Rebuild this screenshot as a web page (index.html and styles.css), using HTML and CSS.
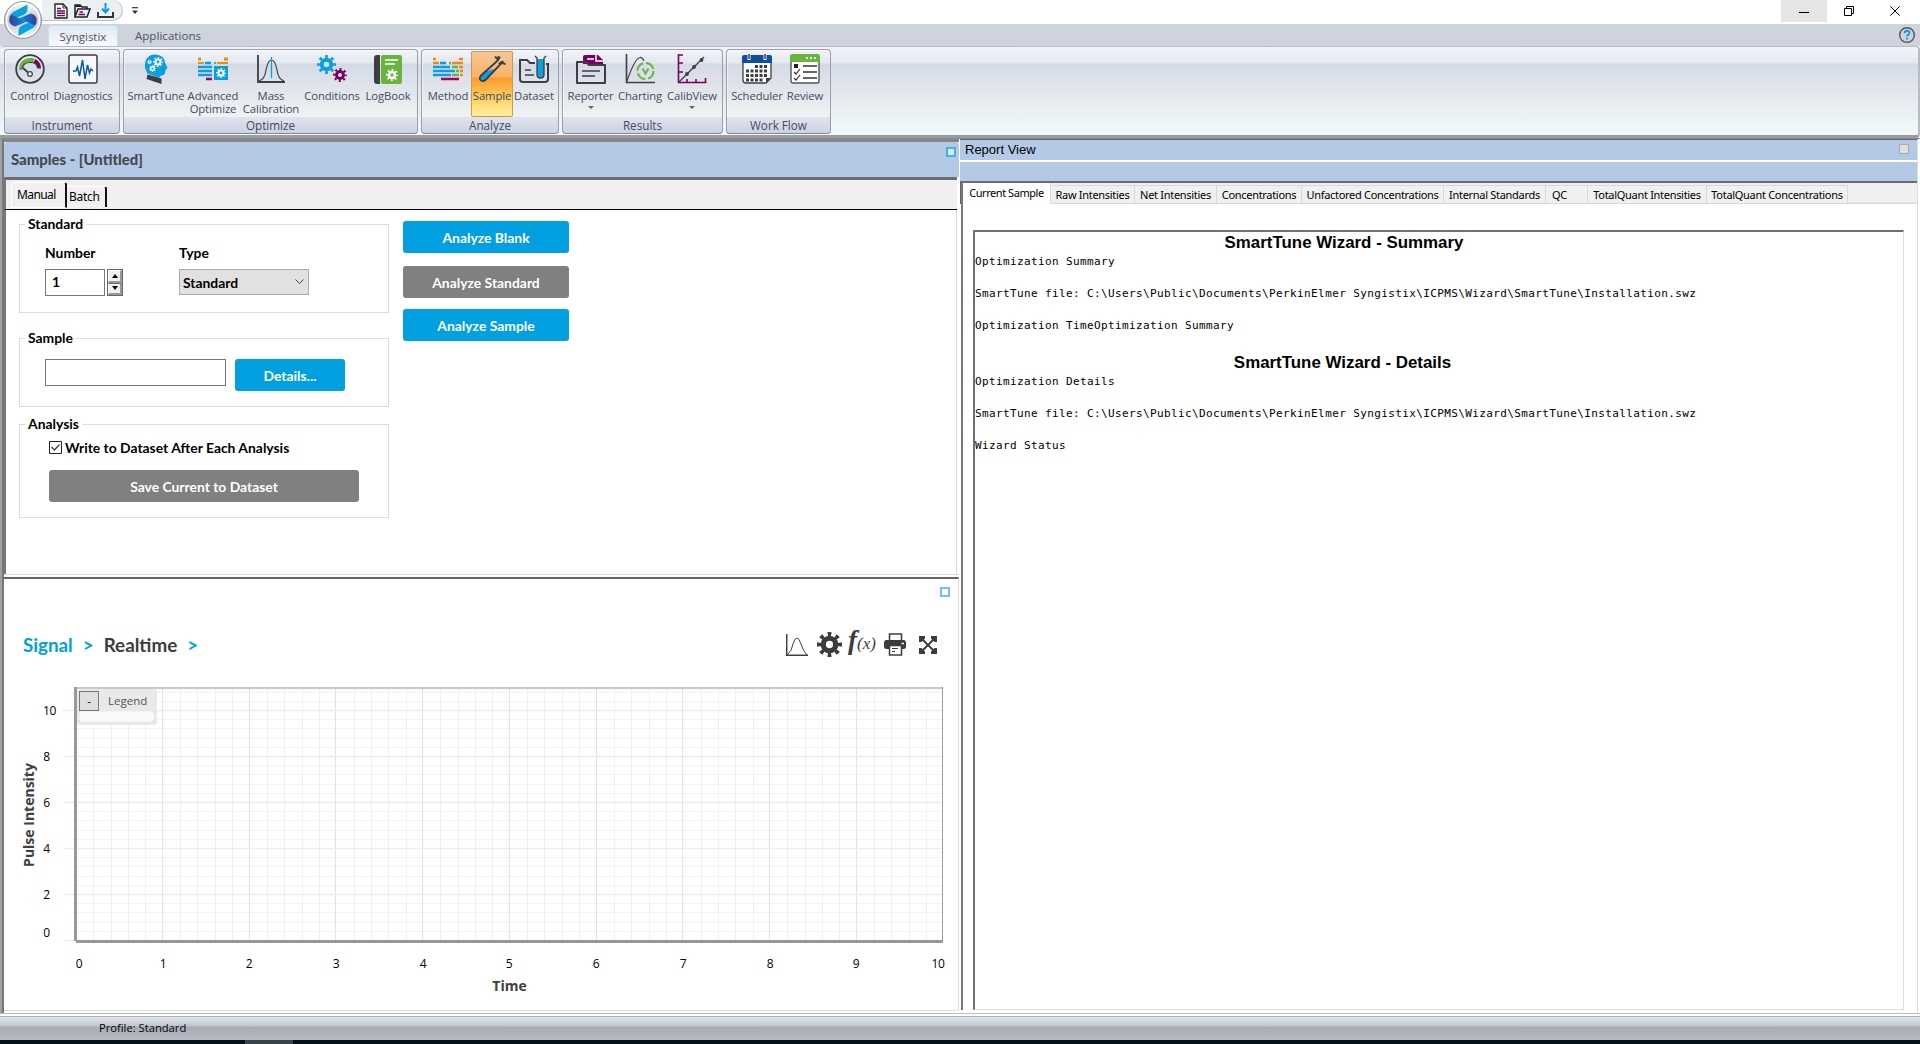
FILE: index.html
```html
<!DOCTYPE html>
<html lang="en">
<head>
<meta charset="utf-8">
<title>Syngistix</title>
<link rel="stylesheet" href="styles.css">
</head>
<body>
<svg class="defs" width="0" height="0">
  <defs>
    <symbol id="gear" viewBox="0 0 24 24">
      <circle cx="12" cy="12" r="6" fill="none" stroke="currentColor" stroke-width="5"/>
      <circle cx="12" cy="12" r="10" fill="none" stroke="currentColor" stroke-width="4" pathLength="16" stroke-dasharray="0.9 1.1" stroke-dashoffset="0.45"/>
    </symbol>
    <linearGradient id="orb" x1="0" y1="0" x2="0" y2="1"><stop offset="0" stop-color="#fff"/><stop offset=".5" stop-color="#c6c7ca"/><stop offset="1" stop-color="#f4f4f5"/></linearGradient>
    <linearGradient id="essA" x1="0" x2="1"><stop offset="0" stop-color="#3d3a9a"/><stop offset=".6" stop-color="#1473c6"/><stop offset="1" stop-color="#06a3df"/></linearGradient>
    <linearGradient id="essB" x1="0" x2="1"><stop offset="0" stop-color="#06a3df"/><stop offset=".4" stop-color="#1473c6"/><stop offset="1" stop-color="#3d3a9a"/></linearGradient>
  </defs>
</svg>
<div class="app">
  <header class="titlebar">
    <svg class="orb" viewBox="0 0 40 40" width="40" height="40">
      <circle cx="20" cy="20" r="18.500" fill="url(#orb)" stroke="#8f9196"/>
      <circle cx="20" cy="20" r="16.500" fill="none" stroke="#fff" stroke-width="1.500"/>
      <path d="M24.500 4.500V9Q24.500 13 20 15L14 17.500 8 20Q6 14 11 11.500Z" fill="#06a3df"/>
      <path d="M15.500 36V31Q15.500 27 20 25L26 22.500 32 20Q34 26 29 28.500Z" fill="#06a3df"/>
      <path d="M6.500 17Q5 25 12 26.500L17 24.500 24 21.500 13.500 17 8 14.500Z" fill="url(#essA)"/>
      <path d="M33.500 23Q35 15 28 13.500L23 15.500 16 18.500 26.500 23 32 25.500Z" fill="url(#essB)"/>
    </svg>
    <div class="quick">
      <svg width="14" height="16" viewBox="0 0 14 16"><path d="M1 1H9L13 5V15H1Z" fill="#fff" stroke="#222" stroke-width="1.400"/><path d="M9 1V5H13" fill="none" stroke="#222"/><path d="M3 5.500H7M3 8H11M3 10.300H11M3 12.600H11" stroke="#7a0060" stroke-width="1.400"/></svg>
      <svg width="17" height="14" viewBox="0 0 17 14"><path d="M1 13V1H6L8 3H13V5M1 13 4 5H16L13 13Z" fill="none" stroke="#222" stroke-width="1.500"/><path d="M1 1H6L8 3H2Z" fill="#222"/><path d="M5.500 8H9M4.500 10.500H11" stroke="#7a0060" stroke-width="1.300"/></svg>
      <svg width="17" height="15" viewBox="0 0 17 15"><path d="M1 9V14H16V9" fill="none" stroke="#333" stroke-width="2"/><path d="M8.500 0V8M5 5.500 8.500 9.500 12 5.500" fill="none" stroke="#0a9ddc" stroke-width="2"/></svg>
    </div>
    <svg class="more" width="6" height="8" viewBox="0 0 6 8"><path d="M0 .7H6" stroke="#333" stroke-width="1.200"/><path d="M0 3.500H6L3 7Z" fill="#333"/></svg>
    <div class="winbtns">
      <span class="wb min"><svg width="10" height="11"><path d="M0 6.500H10" stroke="#000"/></svg></span>
      <span class="wb"><svg width="10" height="10" fill="none" stroke="#000"><path d="M.5 2.500H7.500V9.500H.5ZM2.500 2.500V.5H9.500V7.500H7.500"/></svg></span>
      <span class="wb"><svg width="10" height="10"><path d="M.3.3 9.700 9.700M9.700.3.3 9.700" stroke="#000"/></svg></span>
    </div>
  </header>
  <nav class="tabs"><span class="tab on">Syngistix</span><span class="tab">Applications</span>
    <svg class="help" width="16" height="16" viewBox="0 0 16 16"><circle cx="8" cy="8" r="7.300" fill="none" stroke="#55565a" stroke-width="1.400"/><path d="M5.600 6.200C5.600 2.900 10.400 3 10.400 5.900 10.400 7.700 8 7.600 8 9.600M8 10.800V12.600" fill="none" stroke="#0a9ddc" stroke-width="1.900"/></svg>
  </nav>
  <section class="ribbon">
    <div class="group g1">
      <div class="btns">
        <div class="rb" style="width:43px"><svg viewBox="0 0 30 30"><circle cx="15" cy="15" r="13.800" fill="none" stroke="#3d3e43" stroke-width="1.800"/><path d="M6 14A9.300 9.300 0 0 1 19 6.500" fill="none" stroke="#6ab43e" stroke-width="4"/><path d="M19.500 6.800A9.300 9.300 0 0 1 24 14" fill="none" stroke="#7a0060" stroke-width="4"/><path d="M4 15H7Q8 9 14 8.500 22 8 23 14H26" fill="none" stroke="#3d3e43" stroke-width="1.200"/><path d="M8 14 13 18.500" stroke="#3d3e43" stroke-width="1.800"/><circle cx="15" cy="20" r="2.300" fill="#fff" stroke="#3d3e43" stroke-width="1.300"/></svg><span>Control</span></div>
        <div class="rb" style="width:64px"><svg viewBox="0 0 30 30"><rect x="1" y="1" width="28" height="28" rx="2" fill="#f6f7fa" stroke="#3d3e43" stroke-width="1.500"/><path d="M5 17H8L9.500 13 11.500 22 14.500 6 17 25 19.500 11 21.500 19 23 15 25 17" fill="none" stroke="#0858a8" stroke-width="1.500"/></svg><span>Diagnostics</span></div>
      </div>
      <div class="cap">Instrument</div>
    </div>
    <div class="group g2">
      <div class="btns">
        <div class="rb" style="width:58px"><svg viewBox="0 0 30 30"><path d="M4 14Q3 1 14 .5 23.500 1 24 8.500L26.500 14 24.500 16Q24.500 21.500 20 21.500L18 24 6.500 19.500Z" fill="#0aa0df"/><path d="M6.500 20.500 20.500 24.500V30L5.500 25Z" fill="#3d3e43"/><g color="#fff"><use href="#gear" x="12" y="3" width="10" height="10"/><use href="#gear" x="8" y="11" width="7" height="7"/><use href="#gear" x="6" y="5.500" width="5" height="5"/></g></svg><span>SmartTune</span></div>
        <div class="rb" style="width:56px"><svg viewBox="0 0 30 30"><path d="M0 5H3M26 5H30" stroke="#f08a10" stroke-width="3"/><path d="M0 9H6M19 9H30" stroke="#f08a10" stroke-width="2.200"/><path d="M16 9H18" stroke="#6ab43e" stroke-width="2"/><path d="M7 9H13M0 13H14M0 17H14M0 21H14" stroke="#0aa0df" stroke-width="2.500"/><path d="M8 25H14" stroke="#a8005c" stroke-width="2.500"/><rect x="16" y="12" width="14" height="14" fill="#0aa0df"/><use href="#gear" x="18" y="14" width="10" height="10" color="#fff"/></svg><span>Advanced<br>Optimize</span></div>
        <div class="rb" style="width:60px"><svg viewBox="0 0 30 30"><path d="M2 1V28H29" fill="none" stroke="#3d3e43" stroke-width="1.800"/><path d="M3 27Q9 25 10 16 12 6 15.500 6 19 6 21 16 22 25 28 27" fill="none" stroke="#3d3e43" stroke-width="1.200"/><path d="M15.500 3V24" stroke="#0aa0df" stroke-width="1.300"/></svg><span>Mass<br>Calibration</span></div>
        <div class="rb" style="width:62px"><svg viewBox="0 0 30 30"><use href="#gear" x="0" y="1" width="19" height="19" color="#0aa0df"/><use href="#gear" x="16" y="14" width="14" height="14" color="#7a0060"/></svg><span>Conditions</span></div>
        <div class="rb" style="width:50px"><svg viewBox="0 0 30 30"><path d="M1 4Q1 1 4 1H7V30H4Q1 30 1 27Z" fill="#3d3e43"/><rect x="8" y="1" width="21" height="29" rx="2" fill="#6ab43e"/><path d="M12 6H25M12 10H22" stroke="#fff" stroke-width="1.500"/><use href="#gear" x="13" y="15" width="12" height="12" color="#fff"/></svg><span>LogBook</span></div>
      </div>
      <div class="cap">Optimize</div>
    </div>
    <div class="group g3">
      <div class="btns">
        <div class="rb" style="width:46px"><svg viewBox="0 0 30 30"><path d="M0 5H3M26 5H30M0 9H6M19 9H30" stroke="#f08a10" stroke-width="2.500"/><path d="M16 9H18" stroke="#6ab43e" stroke-width="2.500"/><path d="M7 9H13M0 13H17M0 17H22M0 21H18" stroke="#0aa0df" stroke-width="2.500"/><path d="M19 13H25M23 17H26M19 21H26" stroke="#6ab43e" stroke-width="2.500"/><path d="M26 13H30M27 17H30M27 21H30" stroke="#f08a10" stroke-width="2.500"/><path d="M8 25H26" stroke="#a8005c" stroke-width="2.500"/></svg><span>Method</span></div>
        <div class="rb sel" style="width:42px"><svg viewBox="0 0 30 30"><path d="M8.500 17.500 19 14.500 8.500 25.500Q5.500 27.500 3.500 25.500 2 23.500 4.500 21.500Z" fill="#0aa0df"/><path d="M18 2.500Q20 5.500 22 4.500 21 7 18.500 8.500L4 21.500Q1.500 24.500 4 26.500 6.500 28 9 25.500L24 9.500Q27 8.500 28.500 10.500M18.500 8.500Q22 5 21.500 2M22 10Q24.500 7 26.500 8" fill="none" stroke="#3d3e43" stroke-width="1.900"/></svg><span>Sample</span></div>
        <div class="rb" style="width:42px"><svg viewBox="0 0 30 30"><path d="M16 9H11L8 6H1V25Q1 28 4 28H26Q29 28 29 25V10H27" fill="none" stroke="#3d3e43" stroke-width="2"/><path d="M6 16H12M6 21H15" stroke="#3d3e43" stroke-width="1.500"/><path d="M18 5H25V21Q25 24 21.500 24 18 24 18 21Z" fill="#0aa0df"/><path d="M16 2 18 4V21Q18 24 21.500 24 25 24 25 21V4L27 2" fill="none" stroke="#3d3e43" stroke-width="1.300"/></svg><span>Dataset</span></div>
      </div>
      <div class="cap">Analyze</div>
    </div>
    <div class="group g4">
      <div class="btns">
        <div class="rb" style="width:49px"><svg viewBox="0 0 30 30"><path d="M7 10V3Q7 1 9 1H22L27 6V10Z" fill="#7a0060"/><path d="M11 5H18M20 1V7H27" stroke="#fff" fill="none" stroke-width="1.500"/><path d="M1 8H10L13 11H29V29H1Z" fill="none" stroke="#3d3e43" stroke-width="2" stroke-linejoin="round"/><path d="M6 17H24M6 22H19" stroke="#3d3e43" stroke-width="1.700"/></svg><span>Reporter</span><i></i></div>
        <div class="rb" style="width:50px"><svg viewBox="0 0 30 30"><path d="M1.500 0V28.500H30" fill="none" stroke="#3d3e43" stroke-width="1.600"/><path d="M2 27Q10 4 15 3.500 17 3 19 7" fill="none" stroke="#3d3e43" stroke-width="1.200"/><circle cx="20.500" cy="17" r="8" fill="none" stroke="#6ab43e" stroke-width="2" stroke-dasharray="10 2.600"/><path d="M17.500 14.500 20.500 19.500 23.500 14.500" fill="none" stroke="#6ab43e" stroke-width="2"/></svg><span>Charting</span></div>
        <div class="rb" style="width:54px"><svg viewBox="0 0 30 30"><path d="M1.500 0V28.500H29.500M2 1H6M2 9H6M2 18H6M10 28V25M19 28V25M28.500 28V24" fill="none" stroke="#7a0060" stroke-width="1.600"/><path d="M2 28 27 3" stroke="#3d3e43" stroke-width="1.200"/><g fill="#3d3e43"><circle cx="10" cy="20" r="1.900"/><circle cx="17" cy="13" r="1.900"/><circle cx="24.500" cy="6" r="1.900"/></g></svg><span>CalibView</span><i></i></div>
      </div>
      <div class="cap">Results</div>
    </div>
    <div class="group g5">
      <div class="btns">
        <div class="rb" style="width:56px"><svg viewBox="0 0 30 30"><path d="M1 8V26Q1 29 4 29H24L29 24V8" fill="#fff" stroke="#3d3e43" stroke-width="1.300"/><path d="M0 3Q0 1 2 1H28Q30 1 30 3V9H0Z" fill="#0b4fa3"/><path d="M24 29V24H29Z" fill="#3d3e43"/><path d="M7 0V6M23 0V6" stroke="#fff" stroke-width="3"/><path d="M7 0V5M23 0V5" stroke="#3d3e43" stroke-width="1.500"/><path d="M13 12.500H26M4 17H26M4 21.500H26M4 26H21" stroke="#3d3e43" stroke-width="3" stroke-dasharray="3 1.500"/></svg><span>Scheduler</span></div>
        <div class="rb" style="width:40px"><svg viewBox="0 0 30 30"><rect x="1" y="1" width="28" height="28" rx="2" fill="#fff" stroke="#55565a" stroke-width="1.400"/><path d="M0 3Q0 0 3 0H27Q30 0 30 3V8H0Z" fill="#6ab43e"/><path d="M16 4H27" stroke="#fff" stroke-width="2" stroke-dasharray="2 2"/><rect x="4" y="10" width="4" height="4" fill="#222"/><path d="M13 12H27M13 18H27M13 24H27" stroke="#333" stroke-width="1.500"/><path d="M4 18 6 20 10 15M4 24 6 26 10 21" fill="none" stroke="#333" stroke-width="1.200"/></svg><span>Review</span></div>
      </div>
      <div class="cap">Work Flow</div>
    </div>
  </section>
  <main class="work">
    <div class="left">
      <section class="samples">
        <div class="shead"><b>Samples - [Untitled]</b><i class="sq"></i></div>
        <div class="stabs"><span class="manual">Manual</span><span class="batch">Batch</span></div>
        <div class="sbody">
          <div class="forms">
            <div class="box b1"><h4>Standard</h4>
              <div class="fields">
                <div class="num"><label>Number</label><div class="spin"><span class="inp">1</span><span class="ud"><em class="up"></em><em class="dn"></em></span></div></div>
                <div class="typ"><label>Type</label><div class="combo">Standard<svg width="9" height="6"><path d="M.5.5 4.500 4.500 8.500.5" fill="none" stroke="#444"/></svg></div></div>
              </div>
            </div>
            <div class="box b2"><h4>Sample</h4><div class="srow"><span class="inp wide"></span><span class="btn det">Details...</span></div></div>
            <div class="box b3"><h4>Analysis</h4>
              <div class="chk"><svg width="13" height="13"><path d="M.5.5H12.500V12.500H.5Z" fill="#fff" stroke="#222"/><path d="M2.500 6 5.500 9 10.500 3.500" fill="none" stroke="#333" stroke-width="1.200"/></svg><span>Write to Dataset After Each Analysis</span></div>
              <div class="btn gray save">Save Current to Dataset</div>
            </div>
          </div>
          <div class="acts"><div class="btn">Analyze Blank</div><div class="btn gray">Analyze Standard</div><div class="btn third">Analyze Sample</div></div>
        </div>
      </section>
      <section class="signal">
        <div class="sqrow"><i class="sq"></i></div>
        <div class="crumb"><span class="bl">Signal</span><span class="bl gt">&gt;</span><span class="rt">Realtime</span><span class="bl gt">&gt;</span>
          <div class="tools">
            <svg class="t1" width="22" height="22" viewBox="0 0 22 22"><path d="M.7 0V21.300H22" fill="none" stroke="#404040" stroke-width="1.500"/><path d="M1 21Q6 17 7 10 9 4 11 4 13 4 15 10 17 17 21 21" fill="none" stroke="#404040"/></svg>
            <svg class="t2" width="25" height="25"><use href="#gear" width="25" height="25"/></svg>
            <span class="fx">f<small>(x)</small></span>
            <svg class="t3" width="22" height="23" viewBox="0 0 22 23"><path d="M5.500 8V1H17.500V8" fill="#fff" stroke="#3c3c3c" stroke-width="1.500"/><rect x="0" y="7" width="22" height="9" rx="2.500" fill="#3c3c3c"/><path d="M5.500 12.500H17.500V22H5.500Z" fill="#fff" stroke="#3c3c3c" stroke-width="1.500"/><path d="M8 15.500H14M8 18.500H11" stroke="#3c3c3c"/><path d="M17.500 10.500H20" stroke="#fff" stroke-width="1.500"/></svg>
            <svg width="18" height="18" viewBox="0 0 18 18"><path d="M0 0H6V2.500L2.500 6H0ZM18 0V6H15.500L12 2.500V0ZM0 18V12H2.500L6 15.500V18ZM18 18H12V15.500L15.500 12H18Z" fill="#3c3c3c"/><path d="M3 3 15 15M15 3 3 15" stroke="#3c3c3c" stroke-width="1.900"/></svg>
          </div>
        </div>
        <div class="chart">
          <svg width="950" height="320" viewBox="0 0 950 320" id="plot"></svg>
          <div class="legend"><div class="lt"><em>-</em><span>Legend</span></div><div class="lb"></div></div>
        </div>
      </section>
    </div>
    <section class="report">
      <div class="rhead"><span>Report View</span><i></i></div>
      <div class="rsub"></div>
      <div class="rtabs"><span class="on" style="width:89px">Current Sample</span><span style="width:84px">Raw Intensities</span><span style="width:82px">Net Intensities</span><span style="width:85px">Concentrations</span><span style="width:142px">Unfactored Concentrations</span><span style="width:102px">Internal Standards</span><span class="qc" style="width:42px">QC</span><span style="width:119px">TotalQuant Intensities</span><span style="width:141px">TotalQuant Concentrations</span></div>
      <div class="doc">
        <h3>SmartTune Wizard - Summary</h3>
        <pre>Optimization Summary

SmartTune file: C:\Users\Public\Documents\PerkinElmer Syngistix\ICPMS\Wizard\SmartTune\Installation.swz

Optimization TimeOptimization Summary</pre>
        <h3 class="h2">SmartTune Wizard - Details</h3>
        <pre>Optimization Details

SmartTune file: C:\Users\Public\Documents\PerkinElmer Syngistix\ICPMS\Wizard\SmartTune\Installation.swz

Wizard Status</pre>
      </div>
    </section>
  </main>
  <footer class="status">Profile: Standard</footer>
  <div class="taskbar"><i></i></div>
</div>
<script src="chart.js"></script>
</body>
</html>
```
FILE: chart.js
```js
// Draws the empty Pulse Intensity / Time axes.
var X0 = 72, X1 = 938, Y0 = 259, STEP = 86.75, out = '';
function line(x1, y1, x2, y2, c, w) {
  out += '<path d="M' + x1 + ' ' + y1 + 'L' + x2 + ' ' + y2 + '" stroke="' + c + '" stroke-width="' + (w || 1) + '"/>';
}
function text(x, y, s, cls) {
  out += '<text x="' + x + '" y="' + y + '" class="' + (cls || 'tick') + '">' + s + '</text>';
}
for (var i = 1; i < 50; i++) {
  if (i % 5) line(Math.round(X0 + i * STEP / 5) + .5, 6, Math.round(X0 + i * STEP / 5) + .5, 262, '#f0f0f0');
}
for (var j = 1; j < 28; j++) {
  if (j % 5) line(66, Y0 + .5 - Math.round(j * 9.2), X1, Y0 + .5 - Math.round(j * 9.2), '#f3f3f3');
}
for (i = 1; i < 10; i++) line(Math.round(X0 + i * STEP) - .5, 6, Math.round(X0 + i * STEP) - .5, 262, '#d9e5f1');
for (j = 0; j < 6; j++) line(59, Y0 + .5 - j * 46, X1, Y0 + .5 - j * 46, '#e6eef8', 1.5);
line(70, 7, X1, 7, '#c8c8c8', 2);
line(X1 + .5, 6, X1 + .5, 261, '#9a9a9a');
line(71.500, 6, 71.500, 260, '#999', 3);
line(72, 260.5, X1 + 1, 260.5, '#979797', 3);
text(45.500, 34, 10);
for (j = 1; j < 5; j++) text(42.500, 34 + (5 - j) * 46, j * 2);
text(42.500, 256, 0);
[75, 159, 245, 332, 419, 505, 592, 679, 766, 852, 934].forEach(function (x, n) { text(x, 287, n); });
text(505.500, 310, 'Time', 'axis');
out += '<text class="axis" transform="translate(29.500 134) rotate(-90)">Pulse Intensity</text>';
document.getElementById('plot').innerHTML = out;
```
FILE: styles.css
```css
* { box-sizing: border-box; }
body { margin: 0; background: #fff; font-family: "Open Sans", "Noto Sans", sans-serif; font-size: 12px; color: #000; overflow: hidden; }
.defs { position: absolute; }
.app { width: 1920px; height: 1044px; display: flex; flex-direction: column; white-space: nowrap; }

/* window chrome */
.titlebar { height: 24px; display: flex; flex: none; background: #fff; padding-left: 42px; position: relative; }
.orb { position: absolute; left: 3px; top: 0; z-index: 2; }
.quick { width: 81px; height: 21px; border: 1px solid #b9bfcb; border-width: 0 1px 1px 0; border-radius: 0 12px 12px 0; background: #eceff4; display: flex; gap: 6px; align-items: center; padding: 1px 0 0 12px; }
.more { margin: 7px 0 0 9px; }
.winbtns { margin-left: auto; display: flex; padding-right: 1px; }
.wb { width: 46px; height: 22px; display: flex; align-items: center; justify-content: center; padding-right: 2px; }
.wb.min { background: #e5e5e5; padding-right: 0; }
.tabs { height: 22px; flex: none; background: #ced3dd; padding: 1px 0 0 48px; display: flex; }
.tab { width: 70px; height: 21px; text-align: center; line-height: 22px; color: #4a5568; font-size: 11.500px; }
.tab.on { background: linear-gradient(#e2e9f2, #f8fafc); border: 1px solid #bfe3ea; border-bottom: 0; border-radius: 4px 4px 0 0; line-height: 21px; }
.tab + .tab { width: 100px; letter-spacing: .05px; }
.help { margin: 2px 5px 0 auto; }

/* ribbon */
.ribbon { height: 92px; flex: none; display: flex; gap: 3px; padding: 2px 0 0 4px; background: linear-gradient(#f4f5f9 0, #e4e8f1 16px, #d4dae6 17px, #e6eaee 50px, #f0fafb 88px); border: 1px solid #b6bbc6; border-width: 1px 2px 3px 0; border-color: #b6bbc6 #b6bbc6 #989ca5; border-radius: 4px 4px 4px 0; }
.group { height: 85px; border: 1px solid #9b9fa8; border-bottom: 2px solid #85888e; border-radius: 4px; display: flex; flex-direction: column; background: linear-gradient(#f2f4f8 0, #e3e7f0 13px, #d4dae6 14px, #e6eaee 50px, #eef2f2 66px); box-shadow: inset 1px 1px #fff8; }
.g1 { width: 116px; }
.g2 { width: 295px; }
.g3 { width: 138px; }
.g4 { width: 161px; }
.g5 { width: 105px; }
.btns { display: flex; padding: 1px 0 0 3px; height: 67px; }
.g5 .btns { padding-left: 2px; }
.rb { display: flex; flex-direction: column; align-items: center; height: 66px; padding-top: 3px; color: #444b5c; font-size: 11.300px; }
.rb svg { width: 30px; height: 30px; flex: none; }
.rb span { line-height: 13px; text-align: center; margin-top: 5px; letter-spacing: -.1px; }
.rb i { border: 3px solid transparent; border-top-color: #666; border-bottom: 0; margin-top: 4px; }
.sel { background: linear-gradient(#f5c79c 0, #fbb263 26px, #fb9c2c 27px, #fdd067 48px, #fff3a0); box-shadow: inset 0 0 0 1px #c79a4c; border-radius: 2px; }
.cap { flex: 1; text-align: center; line-height: 16px; font-size: 11.700px; background: linear-gradient(#dfe4ef, #ccd2de); color: #444b5c; border-radius: 0 0 3px 3px; }

/* work area */
.work { height: 876px; flex: none; display: flex; border-top: 1px solid #8a8a8a; border-left: 2px solid #a0a0a0; border-bottom: 1px solid #b8bcc8; margin-bottom: 2px; background: #fff; }
.left { width: 958px; border-left: 2px solid #777; display: flex; flex-direction: column; }
.samples { height: 436px; display: flex; flex-direction: column; border-top: 3px solid #868686; margin-right: 1px; border-bottom: 1px solid #dcdcdc; }
.shead { height: 35px; background: #b3c9e6; border-radius: 3px 3px 0 0; display: flex; justify-content: space-between; padding: 7px 3px 0 7px; font: bold 14.900px/20px Lato, sans-serif; color: #45494f; }
.sq { width: 10px; height: 10px; border: 2px solid #3fb4e2; background: #d5ebf9; flex: none; }
.shead .sq { margin: -2px 0 0; }
.stabs { height: 33px; border-top: 3px solid #6c6c6c; border-bottom: 1px solid #000; border-left: 2px solid #777; background: #f0f0f0; display: flex; padding: 2px 0 1px 5px; margin-right: 2px; font: 12px "Noto Sans", sans-serif; }
.manual { width: 56px; border: 1px solid #fff; border-right: 2px solid #111; border-radius: 3px 3px 0 0; padding: 3px 0 0 5px; height: 26px; letter-spacing: -.6px; }
.batch { width: 40px; margin-top: 4px; border-top: 1px solid #fff; border-right: 2px solid #111; border-radius: 0 3px 0 0; padding: 1px 0 0 2px; height: 21px; letter-spacing: -.3px; }
.sbody { flex: 1; display: flex; border-left: 2px solid #777; border-right: 1px solid #dcdcdc; margin-right: 2px; padding: 14px 0 0 13px; font: bold 13.900px Lato, sans-serif; }
.forms { width: 370px; }
.box { border: 1px solid #dcdcdc; position: relative; padding-left: 25px; }
.box h4 { position: absolute; left: 5px; top: -9px; margin: 0; padding: 0 3px; background: #fff; font-size: 13.900px; line-height: 16px; }
.b1 { height: 89px; }
.b2 { height: 69px; margin-top: 25px; }
.b3 { height: 94px; margin-top: 17px; }
.fields { display: flex; padding-top: 19px; }
.fields label { display: block; height: 25px; line-height: 18px; }
.num { width: 134px; }
.spin { display: flex; gap: 2px; }
.inp { width: 60px; height: 27px; border: 1px solid #777; background: #fff; padding: 3px 6px; display: block; }
.inp.wide { width: 181px; }
.ud { width: 16px; height: 27px; display: flex; flex-direction: column; border: 1px solid #666; }
.ud em { flex: 1; border: 1px solid #fff; border-right: 2px solid #999; border-bottom: 2px solid #999; background: #f0f0f0; display: flex; align-items: center; justify-content: center; }
.ud em::after { content: ""; border: 3.500px solid transparent; border-bottom: 4px solid #000; border-top: 0; }
.ud em.dn { border-top: 1px solid #666; }
.ud em.dn::after { border: 3.500px solid transparent; border-top: 4px solid #000; border-bottom: 0; }
.combo { width: 130px; height: 26px; border: 1px solid #acacac; background: #e1e1e1; display: flex; align-items: center; justify-content: space-between; padding: 0 4px 0 3px; }
.srow { display: flex; padding-top: 20px; gap: 9px; }
.btn { width: 166px; height: 32px; border-radius: 3px; background: #029fe1; color: #fff; display: flex; align-items: center; justify-content: center; padding-top: 1px; }
.btn.gray { background: #808080; }
.btn.det { width: 110px; }
.chk { display: flex; gap: 3px; padding: 16px 0 0 4px; height: 45px; align-items: flex-start; }
.chk span { line-height: 14px; }
.save { width: 310px; margin-left: 4px; }
.acts { width: 166px; margin: -3px 0 0 14px; }
.acts .btn + .btn { margin-top: 13px; }
.acts .btn.third { margin-top: 11px; }

/* signal */
.signal { flex: 1; border-top: 2px solid #666; border-right: 1px solid #ddd; border-bottom: 1px solid #ddd; margin: 2px 1px 2px 0; display: flex; flex-direction: column; }
.sqrow { display: flex; justify-content: flex-end; padding: 8px 8px 0 0; height: 44px; }
.sqrow .sq { border-color: #6cc6ea; background: #fff; }
.crumb { height: 58px; display: flex; align-items: center; padding: 0 0 15px 19px; font: bold 18.800px Lato, sans-serif; color: #3c3c3c; }
.bl { color: #029fe1; }
.gt { margin: 0 10px; }
.tools { margin-left: auto; display: flex; align-items: center; margin-right: 21px; color: #3c3c3c; }
.t1 { margin-right: 9px; }
.t2 { margin-right: 6px; }
.t3 { margin-right: 13px; }
.fx { font: italic bold 27px/22px "Liberation Serif", serif; display: block; width: 29px; margin: -5px 7px 0 0; }
.fx small { font-size: 17px; font-weight: normal; }
.chart { position: relative; height: 320px; }
.chart > svg { display: block; }
.tick { font: 12px "Open Sans", sans-serif; text-anchor: middle; letter-spacing: -.3px; }
.axis { font: bold 14px "Open Sans", sans-serif; fill: #404040; text-anchor: middle; }
.legend { position: absolute; left: 73px; top: 8px; width: 80px; height: 36px; background: #e9e9e9; border-radius: 3px; padding: 1px 3px 3px 2px; }
.lt { display: flex; align-items: center; height: 21px; color: #555; font-size: 11.500px; }
.lt em { width: 20px; height: 20px; border: 1px solid #777; background: #dfdfdf; font-style: normal; text-align: center; line-height: 17px; margin-right: 9px; color: #000; }
.lb { height: 11px; background: #fafafa; border-radius: 2px; box-shadow: inset 0 0 1px #aaa; }

/* report */
.report { flex: 1; border-top: 1px solid #666; margin-right: 2px; border-right: 1px solid #ddd; display: flex; flex-direction: column; position: relative; }
.report::before { content: ""; position: absolute; left: 1px; top: 41px; bottom: 3px; width: 2px; background: #777; }
.rhead { height: 20px; background: #b3c9e6; padding: 0 8px 0 5px; display: flex; justify-content: space-between; font: 13px/19px "Liberation Sans", sans-serif; }
.rhead i { width: 10px; height: 10px; border: 1px solid #aaa; background: #dedede; margin-top: 4px; }
.rsub { height: 21px; border-top: 2px solid #fff; background: #b3c9e6; }
.rtabs { height: 23px; border-top: 2px solid #6c6c6c; border-left: 2px solid #666; background: linear-gradient(#f0f0f0 19px, #d9d9d9 20px); display: flex; font: 11px "Noto Sans", sans-serif; }
.rtabs span { border: 1px solid #d9d9d9; border-left: 0; height: 19px; margin-top: 2px; text-align: center; line-height: 17px; letter-spacing: -.3px; background: #f0f0f0; }
.rtabs .on { background: #fff; border: 0; border-right: 1px solid #d9d9d9; margin: 0; height: 21px; line-height: 19px; letter-spacing: -.45px; padding-left: 1px; }
.rtabs .qc { text-align: left; padding-left: 6px; }
.doc { flex: 1; margin: 26px 13px 3px 13px; border: 1px solid #ddd; border-top: 2px solid #707070; border-left: 2px solid #707070; }
.doc h3 { margin: 0; padding-right: 190px; text-align: center; font: bold 16.900px/21px "Liberation Sans", sans-serif; height: 22px; }
.doc h3.h2 { margin-top: 18px; padding-right: 193px; }
.doc pre { margin: 0; font: 11px/16px "DejaVu Sans Mono", monospace; letter-spacing: .38px; }

.status { height: 24px; flex: none; border-top: 1px solid #a9afbd; background: linear-gradient(#e4e7ed 0, #c0c5ce 9px, #a8acb4 10px, #b8bbc3); padding-left: 99px; line-height: 22px; font-size: 11.200px; }
.taskbar { height: 4px; flex: none; background: #03111a; }
.taskbar i { display: block; margin-left: 245px; width: 48px; height: 4px; background: #38434a; }
```
